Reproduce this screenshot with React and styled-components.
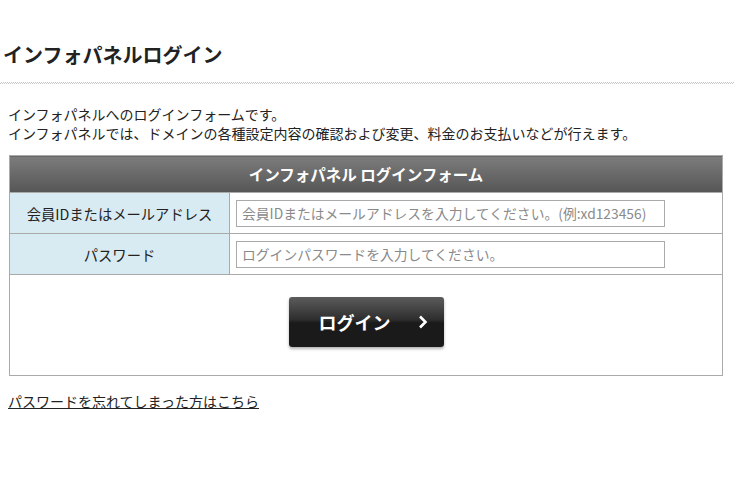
import styled, { createGlobalStyle } from 'styled-components';

const GlobalStyle = createGlobalStyle`
  body {
    margin: 0;
    background: #fff;
    font-family: "Noto Sans CJK JP", "Noto Sans", sans-serif;
    color: #222;
  }
`;

const Page = styled.div`
  width: 746px;
  padding-top: 41px;
`;

const Title = styled.h1`
  margin: 0;
  padding-left: 3px;
  font-size: 20px;
  line-height: 28px;
  font-weight: 700;
  color: #222;
`;

const Dots = styled.div`
  margin-top: 13px;
  width: 734px;
  height: 2px;
  background-image: repeating-conic-gradient(#c8c8c8 0 25%, #fff 0 50%);
  background-size: 2px 2px;
`;

const Content = styled.div`
  padding: 21px 0 0 8px;
`;

const Lead = styled.p`
  margin: 0;
  font-size: 14px;
  line-height: 19px;
  color: #222;
`;

const Table = styled.table`
  margin: 12px 0 0 1px;
  width: 714px;
  border-collapse: collapse;
  border: 1px solid #aaa;
`;

const HeadCell = styled.th`
  height: 36px;
  padding: 0;
  background: linear-gradient(#7c7c7c, #565656);
  color: #fff;
  font-size: 15.5px;
  font-weight: 700;
  text-align: center;
  border-bottom: 1px solid #aaa;
`;

const Label = styled.th`
  width: 219px;
  height: 40px;
  padding: 0;
  background: #d9ebf2;
  font-size: 14.3px;
  font-weight: 400;
  color: #222;
  text-align: center;
  border-bottom: 1px solid #aaa;
  border-right: 1px solid #aaa;
`;

const Field = styled.td`
  padding: 0 6px;
  border-bottom: 1px solid #aaa;
`;

const Input = styled.input`
  box-sizing: border-box;
  display: block;
  width: 429px;
  height: 27px;
  padding: 0 5px;
  border: 1px solid #aaa;
  font-family: "Noto Sans CJK JP", "Noto Sans", sans-serif;
  font-size: 13.8px;
  outline: none;
  &::placeholder {
    color: #8a8a8a;
  }
`;

const ButtonCell = styled.td`
  padding: 22px 0 28px;
  text-align: center;
`;

const LoginButton = styled.button`
  position: relative;
  width: 155px;
  height: 50px;
  border: none;
  border-radius: 3px;
  background: linear-gradient(#5c5c5c 0%, #2e2e2e 45%, #1a1a1a 52%, #1a1a1a 100%);
  box-shadow: 0 2px 3px rgba(0, 0, 0, 0.3);
  color: #fff;
  font-family: "Noto Sans CJK JP", "Noto Sans", sans-serif;
  font-size: 18px;
  font-weight: 700;
  text-align: left;
  padding: 0 0 0 30px;
  cursor: pointer;
  svg {
    position: absolute;
    right: 16px;
    top: 18px;
  }
`;

const ForgotLink = styled.a`
  display: inline-block;
  margin-top: 16px;
  font-size: 14px;
  line-height: 19px;
  color: #222;
  text-decoration: underline;
`;

export default function App() {
  return (
    <Page>
      <GlobalStyle />
      <Title>インフォパネルログイン</Title>
      <Dots />
      <Content>
        <Lead>インフォパネルへのログインフォームです。</Lead>
        <Lead>インフォパネルでは、ドメインの各種設定内容の確認および変更、料金のお支払いなどが行えます。</Lead>
        <Table>
          <thead>
            <tr>
              <HeadCell colSpan={2}>インフォパネル ログインフォーム</HeadCell>
            </tr>
          </thead>
          <tbody>
            <tr>
              <Label>会員IDまたはメールアドレス</Label>
              <Field>
                <Input placeholder="会員IDまたはメールアドレスを入力してください。(例:xd123456)" />
              </Field>
            </tr>
            <tr>
              <Label>パスワード</Label>
              <Field>
                <Input type="password" placeholder="ログインパスワードを入力してください。" />
              </Field>
            </tr>
            <tr>
              <ButtonCell colSpan={2}>
                <LoginButton>
                  ログイン
                  <svg width="10" height="14" viewBox="0 0 10 14">
                    <path d="M2 1.5 L7.5 7 L2 12.5" fill="none" stroke="#fff" strokeWidth="2.6" />
                  </svg>
                </LoginButton>
              </ButtonCell>
            </tr>
          </tbody>
        </Table>
        <ForgotLink href="#">パスワードを忘れてしまった方はこちら</ForgotLink>
      </Content>
    </Page>
  );
}
